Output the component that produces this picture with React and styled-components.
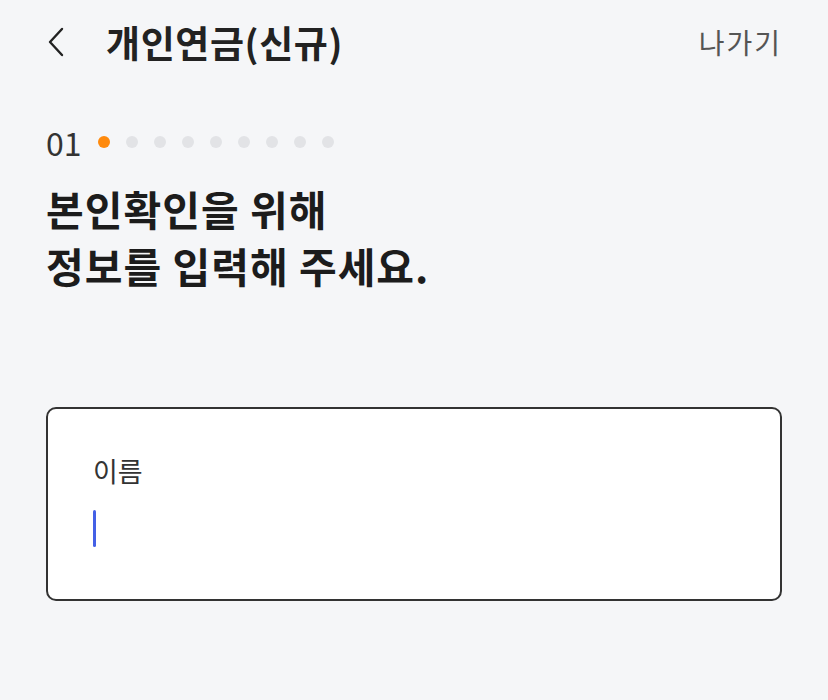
import React from "react";
import styled, { createGlobalStyle } from "styled-components";

const GlobalStyle = createGlobalStyle`
  html, body {
    margin: 0;
    padding: 0;
    background: #f5f6f8;
  }
  body {
    font-family: "Noto Sans CJK KR", "Noto Sans", sans-serif;
    color: #222;
  }
`;

const Page = styled.div`
  width: 828px;
  min-height: 700px;
  background: #f5f6f8;
  box-sizing: border-box;
  padding: 0 46px;
`;

const Header = styled.header`
  display: flex;
  align-items: center;
  height: 84px;
`;

const BackButton = styled.button`
  display: flex;
  align-items: center;
  justify-content: center;
  width: 20px;
  height: 32px;
  padding: 0;
  margin-right: 40px;
  border: none;
  background: none;
  color: #222;
`;

const Title = styled.h1`
  flex: 1;
  margin: 0;
  font-size: 37px;
  font-weight: 700;
  letter-spacing: 0.6px;
  color: #222;
`;

const ExitLink = styled.span`
  font-size: 28px;
  color: #555;
  letter-spacing: 2px;
`;

const Steps = styled.div`
  display: flex;
  align-items: center;
  margin-top: 42px;
`;

const StepNumber = styled.span`
  font-size: 32px;
  color: #333;
  line-height: 1;
  margin-right: 16px;
`;

const Dots = styled.div`
  display: flex;
  gap: 16px;
`;

const Dot = styled.span`
  width: 12px;
  height: 12px;
  border-radius: 50%;
  background: ${(p) => (p.$active ? "#ff8a0d" : "#e2e3e6")};
`;

const Heading = styled.h2`
  margin: 22px 0 0;
  font-size: 41px;
  font-weight: 700;
  line-height: 57px;
  color: #1c1c1c;
  letter-spacing: 1px;
`;

const Field = styled.div`
  margin-top: 113px;
  height: 194px;
  box-sizing: border-box;
  border: 2px solid #333;
  border-radius: 10px;
  background: #fff;
  padding: 44px 45px;
`;

const Label = styled.div`
  font-size: 27px;
  color: #333;
  line-height: 36px;
`;

const Caret = styled.div`
  width: 3px;
  height: 37px;
  margin-top: 21px;
  border-radius: 2px;
  background: #4460e6;
`;

const steps = Array.from({ length: 9 }, (_, i) => i);

export default function App() {
  return (
    <>
      <GlobalStyle />
      <Page>
        <Header>
          <BackButton aria-label="뒤로">
            <svg width="18" height="30" viewBox="0 0 18 30" fill="none">
              <path
                d="M15 2 L3 15 L15 28"
                stroke="#222"
                strokeWidth="2.4"
                strokeLinecap="round"
                strokeLinejoin="round"
              />
            </svg>
          </BackButton>
          <Title>개인연금(신규)</Title>
          <ExitLink>나가기</ExitLink>
        </Header>
        <Steps>
          <StepNumber>01</StepNumber>
          <Dots>
            {steps.map((i) => (
              <Dot key={i} $active={i === 0} />
            ))}
          </Dots>
        </Steps>
        <Heading>
          본인확인을 위해
          <br />
          정보를 입력해 주세요.
        </Heading>
        <Field>
          <Label>이름</Label>
          <Caret />
        </Field>
      </Page>
    </>
  );
}
